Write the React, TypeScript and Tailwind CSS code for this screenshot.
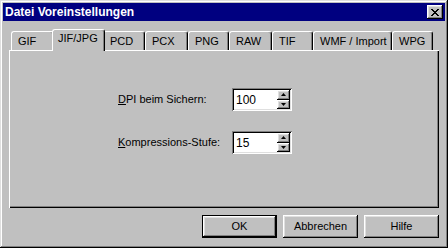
import React from "react";

const raised =
  "shadow-[inset_-1px_-1px_#000,inset_1px_1px_#fff,inset_-2px_-2px_#808080,inset_2px_2px_#dfdfdf]";

function Tab({ label, w, selected }: { label: string; w: number; selected?: boolean }) {
  if (selected) {
    return (
      <div
        style={{ width: w + 4 }}
        className="relative z-10 -mx-[2px] -mb-[1px] flex h-[22px] items-start rounded-t-[3px] border-l border-t border-r border-l-white border-t-white border-r-black bg-[#c0c0c0] pl-[5px] pt-[2px] shadow-[inset_-1px_0_#808080]"
      >
        <span className="leading-[13px]">{label}</span>
      </div>
    );
  }
  return (
    <div
      style={{ width: w }}
      className="flex h-[19px] items-center rounded-t-[3px] border-l border-t border-r border-l-white border-t-white border-r-black bg-[#c0c0c0] pl-[6px] pt-[1px] shadow-[inset_-1px_0_#808080]"
    >
      <span className="leading-[13px]">{label}</span>
    </div>
  );
}

function Arrow({ up }: { up?: boolean }) {
  return (
    <svg width="5" height="3" viewBox="0 0 5 3" className="block">
      {up ? <path d="M2.5 0 L5 3 L0 3 Z" fill="#000" /> : <path d="M0 0 L5 0 L2.5 3 Z" fill="#000" />}
    </svg>
  );
}

function SpinEdit({ value }: { value: string }) {
  return (
    <div className="flex h-[23px] w-[60px] bg-white p-[2px] shadow-[inset_1px_1px_#808080,inset_-1px_-1px_#fff,inset_2px_2px_#000,inset_-2px_-2px_#dfdfdf]">
      <div className="flex flex-1 items-center pl-[2px] text-[12px]">{value}</div>
      <div className="flex w-[13px] flex-col">
        <div className={`flex flex-1 items-center justify-center bg-[#c0c0c0] ${raised}`}>
          <Arrow up />
        </div>
        <div className={`flex flex-1 items-center justify-center bg-[#c0c0c0] ${raised}`}>
          <Arrow />
        </div>
      </div>
    </div>
  );
}

function Button({ label, def }: { label: string; def?: boolean }) {
  return (
    <div
      className={`flex h-[23px] w-[75px] items-center justify-center bg-[#c0c0c0] ${
        def ? "border border-black" : ""
      }`}
    >
      <div className={`flex h-full w-full items-center justify-center ${raised}`}>{label}</div>
    </div>
  );
}

export default function App() {
  const tabs: [string, number][] = [
    ["GIF", 43],
    ["JIF/JPG", 49],
    ["PCD", 42],
    ["PCX", 43],
    ["PNG", 41],
    ["RAW", 43],
    ["TIF", 41],
    ["WMF / Import", 79],
    ["WPG", 41],
  ];
  return (
    <div className="h-[248px] w-[448px] bg-[#c0c0c0] p-[3px] font-['Liberation_Sans',Arial,sans-serif] text-[11px] text-black shadow-[inset_-1px_-1px_#000,inset_1px_1px_#dfdfdf,inset_-2px_-2px_#808080,inset_2px_2px_#fff]">
      <div className="flex h-[18px] items-center justify-between bg-[#000080] pl-[2px] pr-[2px]">
        <span className="text-[12px] font-bold text-white">Datei Voreinstellungen</span>
        <div className={`flex h-[14px] w-[16px] items-center justify-center bg-[#c0c0c0] ${raised}`}>
          <svg width="8" height="7" viewBox="0 0 8 7" className="block">
            <path d="M0 0h2v1h1v1h2v-1h1v-1h2v1h-1v1h-1v1h-1v1h1v1h1v1h1v1h-2v-1h-1v-1h-2v1h-1v1h-2v-1h1v-1h1v-1h1v-1h-1v-1h-1v-1h-1z" fill="#000" />
          </svg>
        </div>
      </div>
      <div className="px-[6px] pt-[8px]">
        <div className="flex h-[21px] items-end pl-[2px]">
          {tabs.map(([l, w], i) => (
            <Tab key={l} label={l} w={w} selected={i === 1} />
          ))}
        </div>
        <div className="h-[158px] shadow-[inset_1px_1px_#fff,inset_-1px_-1px_#000,inset_-2px_-2px_#808080] pl-[109px] pt-[38px]">
          <div className="flex items-center">
            <div className="w-[114px]">
              <span className="underline underline-offset-[1px]">D</span>PI beim Sichern:
            </div>
            <SpinEdit value="100" />
          </div>
          <div className="mt-[20px] flex items-center">
            <div className="w-[114px]">
              <span className="underline underline-offset-[1px]">K</span>ompressions-Stufe:
            </div>
            <SpinEdit value="15" />
          </div>
        </div>
        <div className="mt-[7px] flex justify-end gap-[6px]">
          <Button label="OK" def />
          <Button label="Abbrechen" />
          <Button label="Hilfe" />
        </div>
      </div>
    </div>
  );
}
